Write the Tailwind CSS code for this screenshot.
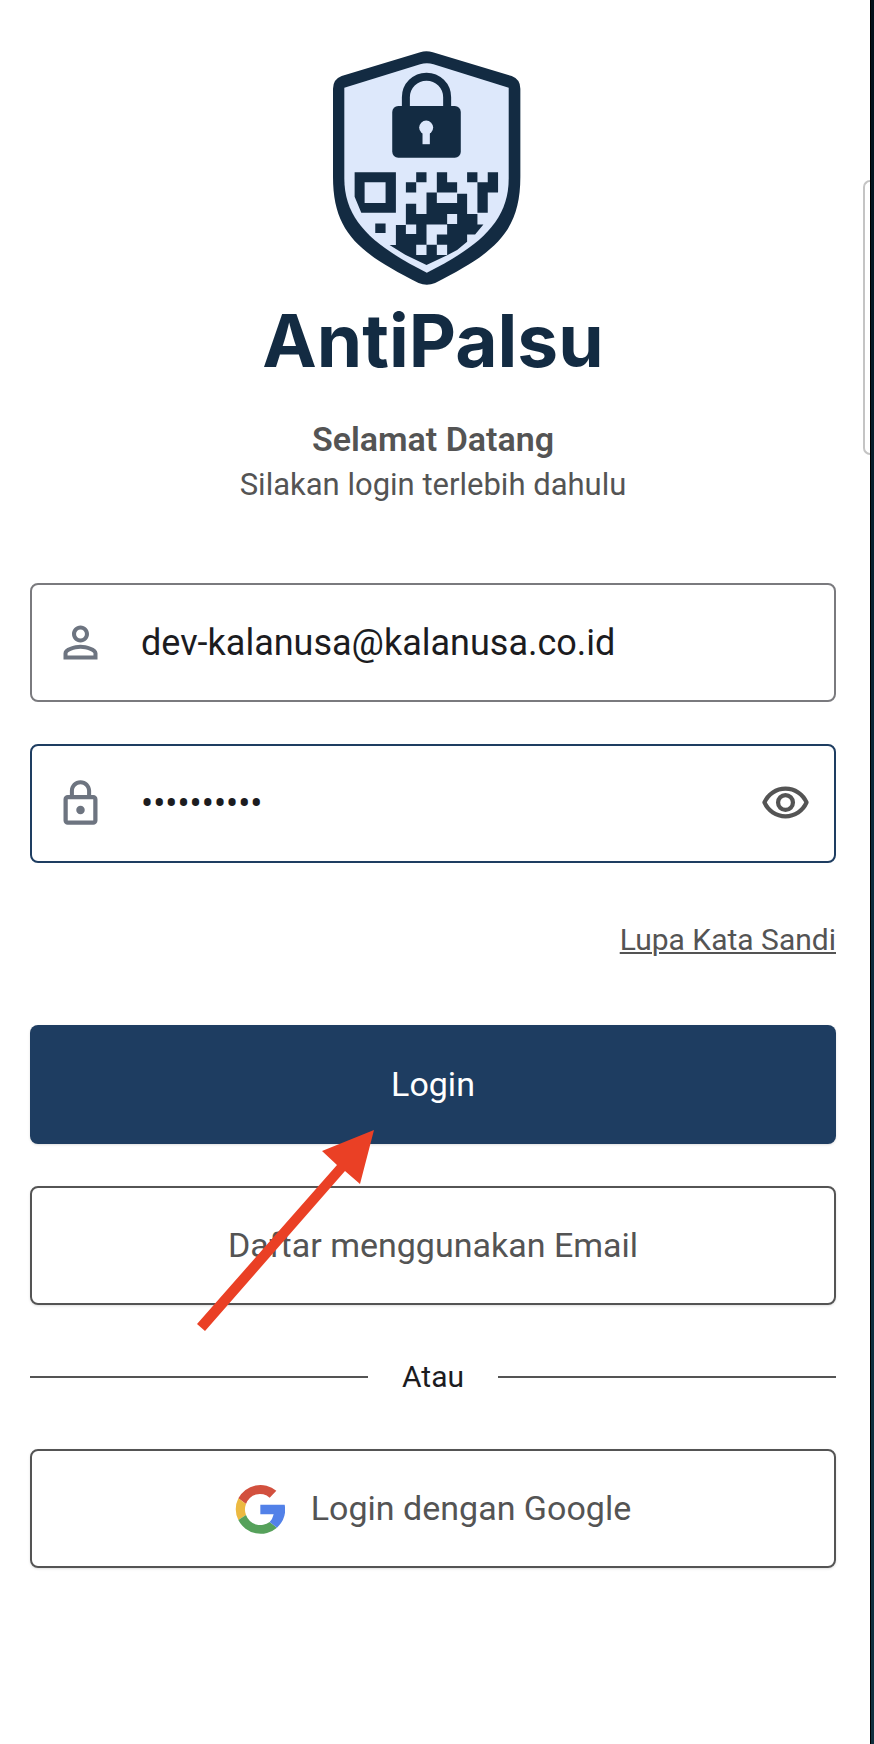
<!DOCTYPE html>
<html lang="id">
<head>
    <meta charset="UTF-8">
    <meta name="viewport" content="width=device-width, initial-scale=1.0">
    <title>AntiPalsu - Login</title>
    <script src="https://cdn.jsdelivr.net/npm/@tailwindcss/browser@4"></script>
</head>
<body class="flex min-h-screen bg-white font-[Roboto,sans-serif] text-[#545454]">
    <main class="relative flex-1 pl-[30px] pr-[34px] pt-[51px] pb-10">
        <!-- Logo -->
        <header class="flex flex-col items-center text-center">
            <svg class="w-[201px] h-[234px]" viewBox="38 32 604 703" role="img" aria-label="Logo AntiPalsu">
                <path fill="#132b42" d="M300 36Q318 29 338 36L575 107Q601 117 601 145V410C601 580 519 640 345 729Q320 739 295 729C120 640 38 580 38 410V145Q38 117 64 107Z"/>
                <path fill="#dde8fb" d="M72 142L300 72Q320 66 340 72L566 142V415C566 545 475 620 320 698C165 620 72 545 72 415Z"/>
                <!-- padlock -->
                <path fill="none" stroke="#132b42" stroke-width="24" d="M257 205V171A62 62 0 0 1 381 171V205"/>
                <rect x="216" y="197" width="206" height="156" rx="18" fill="#132b42"/>
                <circle cx="318" cy="262" r="21" fill="#dde8fb"/>
                <rect x="307" y="270" width="22" height="42" fill="#dde8fb"/>
                <!-- qr code -->
                <g transform="translate(0 360)">
                    <path fill="#132b42" fill-rule="evenodd" d="M103 36H227V158H123L103 110ZM133 66V129H196V66Z"/>
                    <path fill="#132b42" d="M165 190H196V219H165ZM288 36H319V66H288ZM257 66H288V97H257ZM350 36H381V66H411V97H350ZM319 97H350V129H319ZM441 36H472V66H503V36H534V97H503V158H472V66H441Z"/>
                    <path fill="#132b42" d="M257 131H288V162H319V129H411V101H441V162H472V193H490L465 223H441V245L411 270L381 286L319 315L255 284L208 255H227V195H257Z"/>
                    <path fill="#dde8fb" d="M381 162H411V192H381ZM257 193H288V222H257ZM319 193H381V223H350V254H319ZM288 254H319V285H288ZM350 254H381V285H350Z"/>
                </g>
            </svg>
            <h1 class="mt-4 font-[Inter,sans-serif] text-[73px] leading-[80px] font-bold text-[#132b42]">AntiPalsu</h1>
            <p class="mt-9 text-[34px] leading-[44px] font-semibold">Selamat Datang</p>
            <p class="mt-[2px] text-[31px] leading-[44px]">Silakan login terlebih dahulu</p>
        </header>

        <!-- Form login -->
        <form class="mt-[76px]" action="#" method="post">
            <div class="flex h-[119px] items-center rounded-lg border-2 border-[#7a7a7e] px-[23px]">
                <label for="email" class="shrink-0">
                    <svg class="size-[51px] fill-[#6d7480]" viewBox="0 0 24 24" role="img" aria-label="Email">
                        <path d="M12 5.9a2.1 2.1 0 1 1 0 4.2 2.1 2.1 0 0 1 0-4.2m0 9c2.97 0 6.1 1.46 6.1 2.1v1.1H5.9V17c0-.64 3.13-2.1 6.1-2.1M12 4C9.79 4 8 5.79 8 8s1.79 4 4 4 4-1.79 4-4-1.79-4-4-4zm0 9c-2.67 0-8 1.34-8 4v3h16v-3c0-2.66-5.33-4-8-4z"/>
                    </svg>
                </label>
                <input type="email" id="email" name="email" value="dev-kalanusa@kalanusa.co.id" class="ml-[35px] min-w-0 flex-1 bg-transparent text-[36px] leading-[44px] text-[#1c1c1f] outline-none">
            </div>

            <div class="mt-[42px] flex h-[119px] items-center rounded-lg border-2 border-[#1e3d61] px-[23px]">
                <label for="password" class="shrink-0">
                    <svg class="size-[51px] fill-[#6d7480]" viewBox="0 0 24 24" role="img" aria-label="Kata Sandi">
                        <path d="M12 17c1.1 0 2-.9 2-2s-.9-2-2-2-2 .9-2 2 .9 2 2 2zm6-9h-1V6c0-2.76-2.24-5-5-5S7 3.24 7 6v2H6c-1.1 0-2 .9-2 2v10c0 1.1.9 2 2 2h12c1.1 0 2-.9 2-2V10c0-1.1-.9-2-2-2zM8.9 6c0-1.71 1.39-3.1 3.1-3.1s3.1 1.39 3.1 3.1v2H8.9V6zM18 20H6V10h12v10z"/>
                    </svg>
                </label>
                <input type="password" id="password" name="password" value="kalanusa01" class="ml-[35px] min-w-0 flex-1 bg-transparent text-[36px] leading-[44px] text-[#1c1c1f] outline-none">
                <button type="button" id="toggle-password" class="shrink-0" aria-label="Tampilkan kata sandi">
                    <svg class="size-[51px] fill-none stroke-[#545454] stroke-2" viewBox="0 0 24 24" stroke-linejoin="round" aria-hidden="true">
                        <path d="M2.1 11.5C3.8 7.6 7.6 5 12 5s8.2 2.6 9.9 6.5c-1.7 3.9-5.5 6.5-9.9 6.5s-8.2-2.6-9.9-6.5Z"/>
                        <circle cx="12" cy="11.5" r="3.5"/>
                    </svg>
                </button>
            </div>

            <div class="mt-[55px] flex justify-end">
                <a href="#" class="text-[30px] leading-[44px] underline decoration-2 underline-offset-2">Lupa Kata Sandi</a>
            </div>

            <div class="relative mt-[63px]">
                <button type="submit" class="h-[119px] w-full rounded-lg bg-[#1e3d61] text-[34px] text-white shadow-sm">Login</button>
                <!-- panah penunjuk -->
                <svg class="pointer-events-none absolute left-[167px] top-[105px] h-[201px] w-[177px]" viewBox="197 1129 177 201" aria-hidden="true">
                    <path fill="#ea4025" d="M374 1129L360 1183L345 1170L205 1330L197 1323L337 1164L322 1150Z"/>
                </svg>
            </div>
            <button type="button" class="mt-[42px] h-[119px] w-full rounded-lg border-2 border-[#545454] text-[34px] shadow-sm">Daftar menggunakan Email</button>
        </form>

        <div class="mt-[50px] flex items-center gap-[34px]">
            <hr class="flex-1 border-t-2 border-[#545454]">
            <span class="text-[30px] leading-[44px] text-[#1c1c1f]">Atau</span>
            <hr class="flex-1 border-t-2 border-[#545454]">
        </div>

        <button type="button" class="mt-[50px] flex h-[119px] w-full items-center justify-center gap-[26px] rounded-lg border-2 border-[#545454] text-[34px] shadow-sm">
            <svg class="size-[50px]" viewBox="79 431 150 150" aria-hidden="true">
                <path fill="#d2503e" d="M89 474A75 75 0 0 1 203 451L183 472A44 44 0 0 0 112 491Z"/>
                <path fill="#ecb941" d="M89 474A75 75 0 0 0 89 539L112 524A46 46 0 0 1 112 491Z"/>
                <path fill="#56a15b" d="M89 539A75 75 0 0 0 205 562L183 545A46 46 0 0 1 112 524Z"/>
                <path fill="#5281e8" d="M155 493H228A75 75 0 0 1 205 562L183 545Q192 536 195 522H155Z"/>
            </svg>
            <span>Login dengan Google</span>
        </button>

        <!-- edge panel handle -->
        <div class="absolute right-0 top-[180px] h-[275px] w-[7px] rounded-l-lg border-2 border-r-0 border-[#c4c4c4]"></div>
    </main>
    <div class="w-1 shrink-0 border-l border-black bg-linear-to-b from-[#020f18] via-[#0c2a3c] to-[#10303f]"></div>

    <script>
        document.getElementById('toggle-password').addEventListener('click', function() {
            const input = document.getElementById('password');
            input.type = input.type === 'password' ? 'text' : 'password';
        });
    </script>
</body>
</html>
